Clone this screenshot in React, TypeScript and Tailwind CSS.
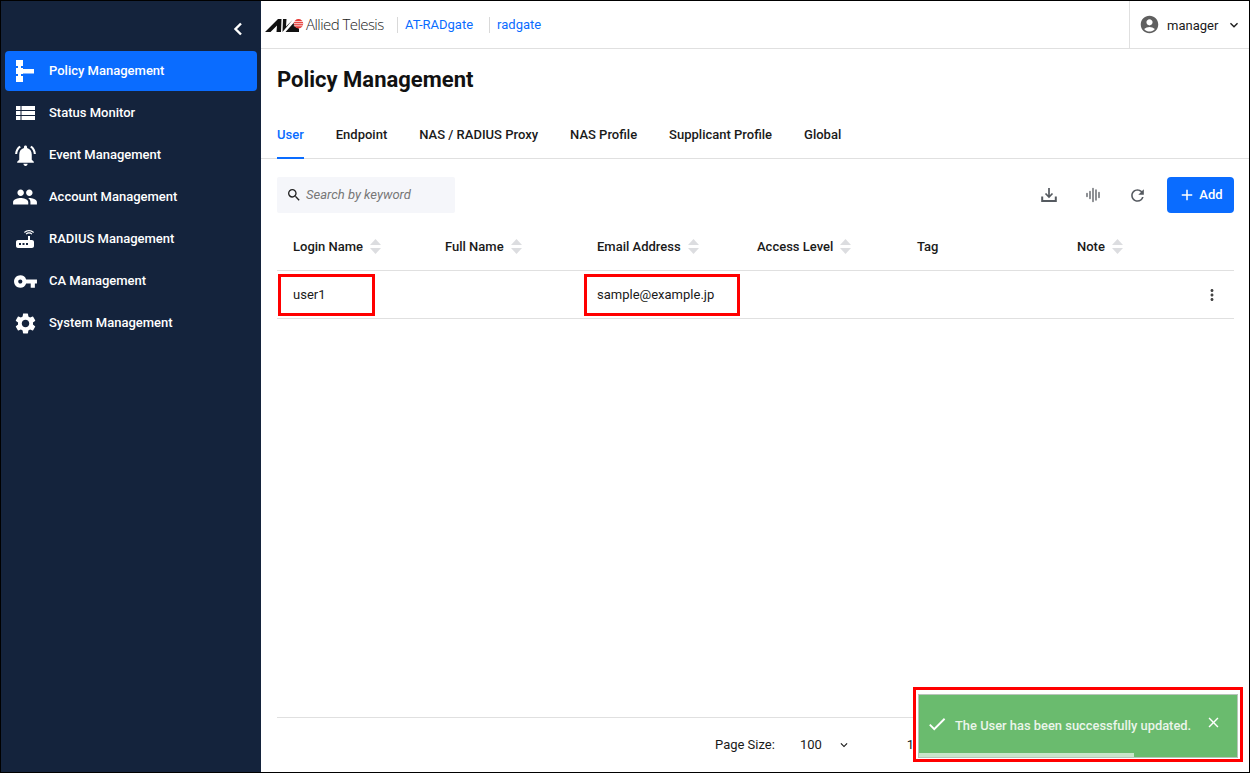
import React from "react";
import { MdNotificationsActive, MdPeople, MdRouter, MdVpnKey, MdSettings, MdCheck, MdClose, MdMoreVert, MdAdd, MdSearch, MdAccountCircle, MdKeyboardArrowDown, MdRefresh } from "react-icons/md";

const PolicyIcon = () => (
  <svg width="18" height="22" viewBox="0 0 18 22" fill="#fff">
    <rect x="0" y="0" width="7" height="6" />
    <rect x="0" y="8" width="7" height="6" />
    <rect x="0" y="16" width="7" height="6" />
    <rect x="2" y="5" width="3" height="12" />
    <rect x="6" y="9" width="12" height="4.5" />
  </svg>
);

const TableIcon = () => (
  <svg width="19" height="14" viewBox="0 0 19 14" fill="#fff">
    <rect x="0" y="0" width="19" height="4" />
    <rect x="0" y="5" width="19" height="4" />
    <rect x="0" y="10" width="19" height="4" />
    <rect x="4.5" y="0" width="1" height="14" fill="#14233c" />
  </svg>
);

const nav = [
  { label: "Policy Management", icon: <PolicyIcon />, active: true },
  { label: "Status Monitor", icon: <TableIcon /> },
  { label: "Event Management", icon: <MdNotificationsActive size={25} /> },
  { label: "Account Management", icon: <MdPeople size={26} /> },
  { label: "RADIUS Management", icon: <MdRouter size={24} /> },
  { label: "CA Management", icon: <MdVpnKey size={25} /> },
  { label: "System Management", icon: <MdSettings size={25} /> },
];

const Sort = () => (
  <svg width="11" height="15" viewBox="0 0 11 15" fill="#dcdde0" className="ml-[7px]">
    <path d="M5.5 0 L11 6 H0 Z" />
    <path d="M0 9 H11 L5.5 15 Z" />
  </svg>
);

const cols = ["Login Name", "Full Name", "Email Address", "Access Level", "Tag", "Note"];

const Logo = () => (
  <div className="flex items-center">
    <svg width="39" height="13" viewBox="0 0 39 13" className="mt-[1px]">
      <path d="M0 13 L13 0 H16.5 L16 13 H11.5 L12 6.5 L5.5 13 Z" fill="#111" />
      <path d="M18 0 H21.5 L21 7.5 L27.5 1 L17.5 13 Z" fill="#111" />
      <path d="M20.5 13 L29 3.5 C 29.5 7 31 9 34 9.5 V13 Z" fill="#111" />
      <circle cx="33.5" cy="4.7" r="4.7" fill="#e53935" />
      <path d="M28.8 2.6 H38.2 M28.6 4.7 H38.4 M28.8 6.8 H38.2" stroke="#fff" strokeWidth="0.8" />
    </svg>
    <span className="ml-[2px] text-[15px] font-light tracking-[-0.55px] text-[#222] font-['Open_Sans',sans-serif]">Allied Telesis</span>
  </div>
);

const WaveIcon = () => (
  <svg width="16" height="16" viewBox="0 0 16 16" stroke="#5f6368" strokeWidth="1.4" strokeLinecap="round" className="ml-[1px]">
    <path d="M1 6.5 V9.5 M4 4.5 V11.5 M7 1.5 V14.5 M10 3 V13 M13 5.5 V10.5" />
  </svg>
);

const DownloadIcon = () => (
  <svg width="16" height="16" viewBox="0 0 16 16" fill="none" stroke="#555a60" strokeWidth="1.7">
    <path d="M8 1 V10 M4.5 6.5 L8 10 L11.5 6.5" />
    <path d="M1.2 9.5 V14 H14.8 V9.5" strokeWidth="2" />
  </svg>
);

const Tool = ({ children }: { children: React.ReactNode }) => (
  <div className="w-[44px] flex justify-center items-center">{children}</div>
);

export default function App() {
  return (
    <div className="relative w-[1250px] h-[773px] border border-black flex overflow-hidden bg-white font-['Roboto',sans-serif] text-[#1a1a1a]">
      <aside className="w-[260px] shrink-0 bg-[#14233c] flex flex-col">
        <div className="h-[50px] flex items-center justify-end pr-[18px] pt-[6px]">
          <svg width="10" height="14" viewBox="0 0 10 14" fill="none" stroke="#fff" strokeWidth="2.4">
            <path d="M8 1.5 L2.5 7 L8 12.5" />
          </svg>
        </div>
        <nav className="flex flex-col gap-[2px] pl-[4px] pr-[4px]">
          {nav.map((n) => (
            <div
              key={n.label}
              className={`h-[40px] flex items-center rounded-[4px] text-white text-[13px] font-medium ${n.active ? "bg-[#0a6cff]" : ""}`}
            >
              <span className="w-[44px] pr-[4px] flex justify-center items-center shrink-0">{n.icon}</span>
              <span>{n.label}</span>
            </div>
          ))}
        </nav>
      </aside>

      <main className="flex-1 flex flex-col min-w-0">
        <header className="h-[48px] shrink-0 border-b border-[#e0e0e0] flex items-center">
          <div className="pl-[4px] w-[136px]"><Logo /></div>
          <div className="h-[16px] border-l border-[#d9d9d9] pl-[7px] text-[13px] leading-[16px] text-[#0a6cff]">AT-RADgate</div>
          <div className="ml-[16px] h-[16px] border-l border-[#d9d9d9] pl-[7px] text-[13px] leading-[16px] text-[#0a6cff]">radgate</div>
          <div className="ml-auto h-full w-[120px] border-l border-[#e0e0e0] flex items-center pl-[9px]">
            <MdAccountCircle size={21} className="text-[#5f5f5f]" />
            <span className="ml-[7px] pt-[2px] text-[13px]">manager</span>
            <MdKeyboardArrowDown size={16} className="ml-[8px] mt-[1px]" />
          </div>
        </header>

        <div className="flex-1 flex flex-col pl-[16px] pr-[15px] min-h-0">
          <h1 className="mt-[16px] text-[22px] leading-[30px] font-bold text-[#111]">Policy Management</h1>

          <div className="-ml-[16px] -mr-[15px] mt-[16px] pl-[16px] h-[48px] border-b border-[#e0e0e0] flex gap-[32px] text-[13px] font-medium">
            {["User", "Endpoint", "NAS / RADIUS Proxy", "NAS Profile", "Supplicant Profile", "Global"].map((t, i) => (
              <div
                key={t}
                className={`h-[48px] flex items-center ${i === 0 ? "text-[#0a6cff] border-b-2 border-[#0a6cff] pt-[2px]" : "text-[#1a1a1a]"}`}
              >
                {t}
              </div>
            ))}
          </div>

          <div className="mt-[18px] flex items-center h-[36px]">
            <div className="w-[178px] h-[36px] bg-[#f5f6fa] flex items-center pl-[9px] rounded-[2px]">
              <MdSearch size={16} className="text-[#222]" />
              <span className="ml-[4px] text-[13px] italic text-[#777]">Search by keyword</span>
            </div>
            <div className="ml-auto flex items-center">
              <Tool><DownloadIcon /></Tool>
              <Tool><WaveIcon /></Tool>
              <Tool><MdRefresh size={19} className="text-[#555a60]" /></Tool>
              <div className="ml-[8px] w-[67px] h-[36px] bg-[#0a6cff] rounded-[4px] text-white flex items-center justify-center text-[13px] font-medium">
                <MdAdd size={18} />
                <span className="ml-[3px]">Add</span>
              </div>
            </div>
          </div>

          <div className="mt-[9px] pt-[1px] grid grid-cols-[152px_152px_160px_160px_160px_1fr] h-[49px] border-b border-[#e0e0e0] items-center text-[13px] font-medium">
            {cols.map((c) => (
              <div key={c} className="pl-[16px] flex items-center">
                <span>{c}</span>
                {c === "Tag" ? null : <Sort />}
              </div>
            ))}
          </div>

          <div className="grid grid-cols-[152px_152px_160px_160px_160px_1fr] h-[48px] border-b border-[#e0e0e0] items-center text-[13px]">
            <div className="pl-[16px]">user1</div>
            <div />
            <div className="pl-[16px]">sample@example.jp</div>
            <div />
            <div />
            <div className="flex justify-end pr-[13px]">
              <MdMoreVert size={18} className="text-[#444]" />
            </div>
          </div>

          <div className="mt-auto h-[55px] border-t border-[#e0e0e0] flex items-center text-[13px]">
            <span className="ml-[438px]">Page Size:</span>
            <span className="ml-[25px]">100</span>
            <MdKeyboardArrowDown size={14} className="ml-[15px]" />
            <span className="ml-[56px]">1</span>
          </div>
        </div>
      </main>

      <div className="absolute left-[277px] top-[273px] w-[97px] h-[42px] border-[3px] border-[#ff0000]" />
      <div className="absolute left-[583px] top-[273px] w-[156px] h-[42px] border-[3px] border-[#ff0000]" />

      <div className="absolute left-[912px] top-[686px] w-[330px] h-[75px] border-[3px] border-[#ff0000] bg-white pl-[2px] pr-[2px] pt-[4px] pb-[1px]">
        <div className="relative h-full bg-[#6abb6e] border border-[#b9c4ba] text-white flex items-start">
          <MdCheck size={22} className="mt-[18px] ml-[7px]" />
          <span className="ml-[7px] mt-[23px] text-[12.9px] font-medium leading-[16px] text-[#eaf5ea]">The User has been successfully updated.</span>
          <MdClose size={17} className="absolute right-[15px] top-[19px]" />
          <div className="absolute left-0 bottom-0 h-[4px] w-[215px] bg-[#c8e5ca]" />
        </div>
      </div>
    </div>
  );
}
